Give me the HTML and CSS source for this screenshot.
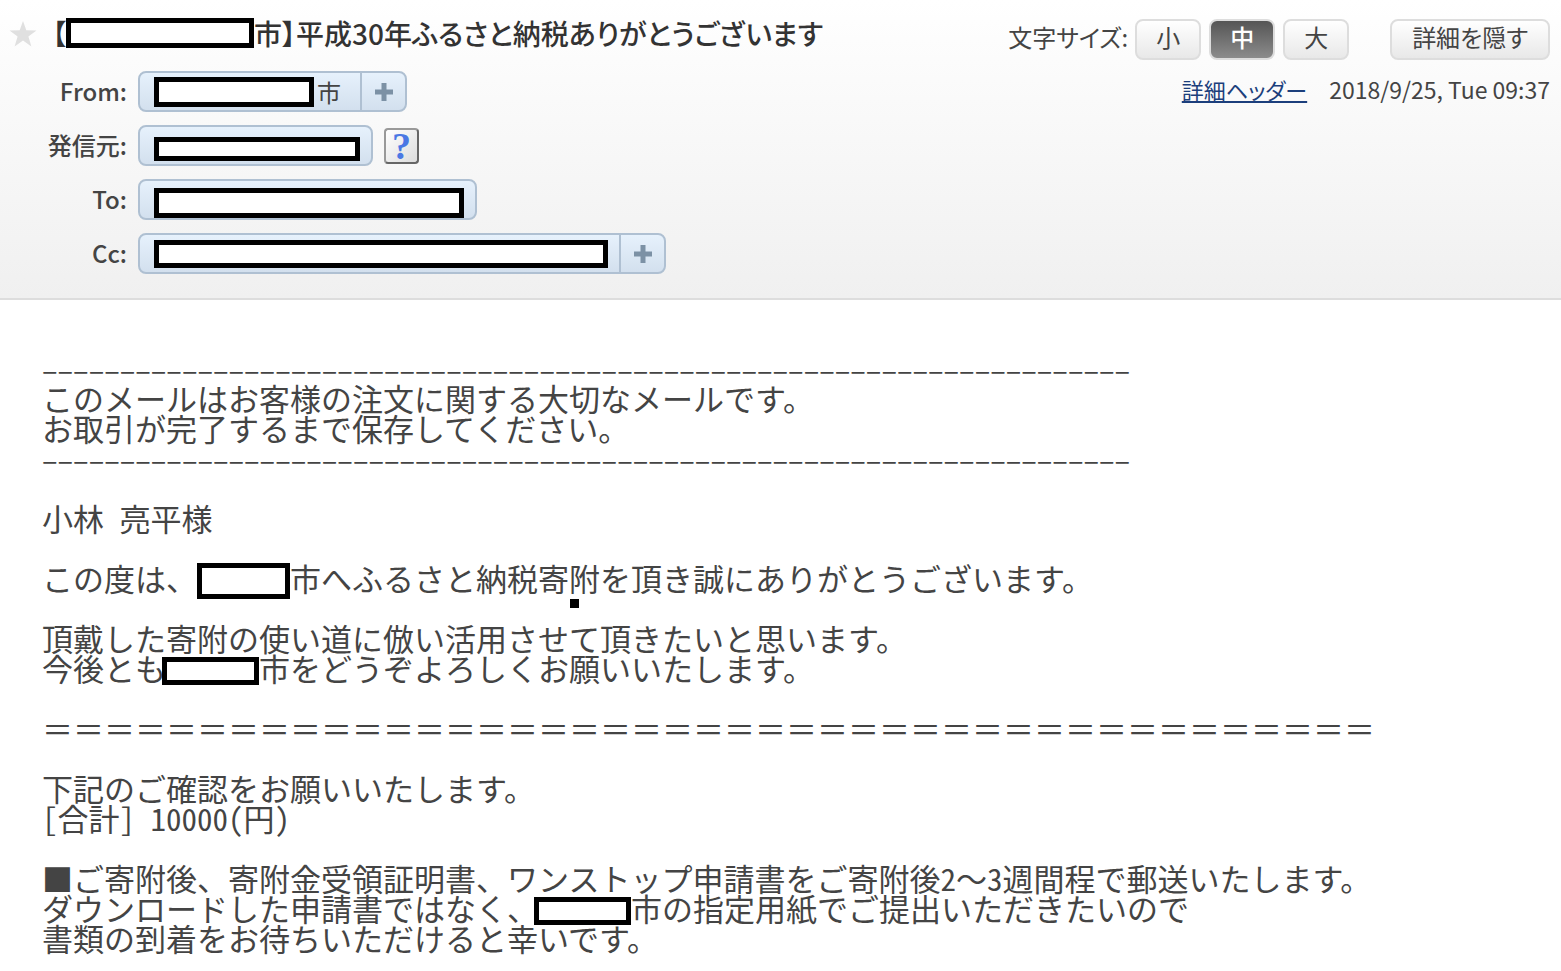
FILE: index.html
```html
<!DOCTYPE html>
<html lang="ja">
<head>
    <meta charset="UTF-8">
    <meta name="viewport" content="width=device-width, initial-scale=1.0">
    <title>平成30年ふるさと納税ありがとうございます</title>
    <link rel="stylesheet" href="styles.css">
</head>
<body>
    <header class="mail-header">
        <div class="mail-main">
            <div class="subject-row">
                <button type="button" class="star" aria-label="スター">
                    <svg width="28" height="26" viewBox="0 0 28 26"><path d="M14 0 L17.3 9.3 L27.5 9.6 L19.4 15.6 L22.4 25.4 L14 19.6 L5.6 25.4 L8.6 15.6 L0.5 9.6 L10.7 9.3 Z" fill="#e0e0e0"/></svg>
                </button>
                <h1 class="subject">【<span class="mask mask-subject"></span>市】平成30年ふるさと納税ありがとうございます</h1>
            </div>

            <dl class="fields">
                <dt>From:</dt>
                <dd>
                    <span class="chip">
                        <span class="chip-name with-text"><span class="mask mask-from"></span>市</span>
                        <button type="button" class="add" aria-label="アドレス帳に追加">
                            <svg width="20" height="20" viewBox="0 0 20 20"><path d="M10 1V19M1 10H19" stroke="#7c91a5" stroke-width="5"/></svg>
                        </button>
                    </span>
                </dd>
                <dt>発信元:</dt>
                <dd>
                    <span class="chip">
                        <span class="chip-name"><span class="mask mask-sender"></span></span>
                    </span>
                    <button type="button" class="help">?</button>
                </dd>
                <dt>To:</dt>
                <dd>
                    <span class="chip">
                        <span class="chip-name"><span class="mask mask-to"></span></span>
                    </span>
                </dd>
                <dt>Cc:</dt>
                <dd>
                    <span class="chip">
                        <span class="chip-name"><span class="mask mask-cc"></span></span>
                        <button type="button" class="add" aria-label="アドレス帳に追加">
                            <svg width="20" height="20" viewBox="0 0 20 20"><path d="M10 1V19M1 10H19" stroke="#7c91a5" stroke-width="5"/></svg>
                        </button>
                    </span>
                </dd>
            </dl>
        </div>

        <div class="mail-tools">
            <div class="tool-row">
                <span class="size-label">文字サイズ:</span>
                <div class="sizes">
                    <button type="button" class="btn">小</button>
                    <button type="button" class="btn active">中</button>
                    <button type="button" class="btn">大</button>
                </div>
                <button type="button" class="btn btn-detail">詳細を隠す</button>
            </div>
            <div class="meta-row">
                <a href="#">詳細ヘッダー</a>
                <time datetime="2018-09-25T09:37">2018/9/25, Tue 09:37</time>
            </div>
        </div>
    </header>

    <main class="mail-body">
        <p>
            <span class="rule">––––––––––––––––––––––––––––––––––––––––––––––––––––––––––––––––––––––</span><br>
            このメールはお客様の注文に関する大切なメールです。<br>
            お取引が完了するまで保存してください。<br>
            <span class="rule">––––––––––––––––––––––––––––––––––––––––––––––––––––––––––––––––––––––</span>
        </p>
        <p>小林 亮平様</p>
        <p>この度は、<span class="mask mask-city tall"></span>市へふるさと納税寄<span class="dotted">附</span>を頂き誠にありがとうございます。</p>
        <p>
            頂戴した寄附の使い道に倣い活用させて頂きたいと思います。<br>
            今後とも<span class="mask mask-city"></span>市をどうぞよろしくお願いいたします。
        </p>
        <p class="full-width">＝＝＝＝＝＝＝＝＝＝＝＝＝＝＝＝＝＝＝＝＝＝＝＝＝＝＝＝＝＝＝＝＝＝＝＝＝＝＝＝＝＝＝</p>
        <p>
            下記のご確認をお願いいたします。<br>
            [合計] 10000(円)
        </p>
        <p>
            ■ご寄附後、寄附金受領証明書、ワンストップ申請書をご寄附後2<span class="full-width">～</span>3週間程で郵送いたします。<br>
            ダウンロードした申請書ではなく、<span class="mask mask-city"></span>市の指定用紙でご提出いただきたいので<br>
            書類の到着をお待ちいただけると幸いです。
        </p>
    </main>
</body>
</html>
```
FILE: styles.css
```css
* {
    box-sizing: border-box;
}

body {
    margin: 0;
    background: #fff;
    color: #444;
    font-family: "Noto Sans CJK JP", "Liberation Sans", sans-serif;
}

button {
    font-family: inherit;
    padding: 0;
    cursor: pointer;
}

/* Header */
.mail-header {
    display: flex;
    justify-content: space-between;
    padding: 12px 11px 24px 9px;
    border-bottom: 2px solid #ddd;
    background: linear-gradient(to bottom, #fff, #f0f0f0);
    font-size: 24px;
    font-feature-settings: "palt";
}

.subject-row {
    display: flex;
    align-items: center;
    gap: 15px;
    height: 44px;
}

.star {
    display: flex;
    border: none;
    background: none;
}

.subject {
    display: flex;
    align-items: center;
    margin: 0;
    padding-bottom: 2px;
    color: #333;
    font-size: 28px;
    font-weight: 500;
    line-height: 42px;
    white-space: nowrap;
}

.fields {
    display: grid;
    grid-template-columns: 118px auto;
    column-gap: 11px;
    row-gap: 13px;
    margin: 15px 0 0;
}

.fields dt {
    text-align: right;
    font-weight: 500;
    line-height: 40px;
}

.fields dd {
    display: flex;
    align-items: center;
    gap: 11px;
    margin: 0;
}

.chip {
    display: flex;
    height: 41px;
    border: 2px solid #afc0d2;
    border-radius: 8px;
    background: linear-gradient(to bottom, #e6f1fc, #d3e0ee);
}

.chip-name {
    display: flex;
    align-items: center;
    gap: 3px;
    padding: 0 11px 0 14px;
    line-height: 34px;
}

.chip-name.with-text {
    padding-right: 19px;
}

.add {
    display: flex;
    align-items: center;
    justify-content: center;
    width: 45px;
    border: none;
    border-left: 2px solid #afc0d2;
    background: none;
}

.help {
    width: 35px;
    height: 36px;
    border: 2px solid #777;
    border-color: #999 #666 #666 #999;
    border-radius: 4px;
    background: linear-gradient(135deg, #fff, #dcdcdc);
    color: #4a78e4;
    font-family: "Liberation Serif", serif;
    font-size: 38px;
    font-weight: bold;
    line-height: 32px;
}

/* Blacked-out names */
.mask {
    display: inline-block;
    flex: none;
    border: 5px solid #000;
    background: #fff;
}

.mask-subject {
    width: 188px;
    height: 30px;
}

.mask-from {
    width: 160px;
    height: 30px;
}

.mask-sender {
    align-self: flex-end;
    width: 206px;
    height: 24px;
    margin-bottom: 3px;
}

.mask-to {
    align-self: flex-end;
    width: 310px;
    height: 30px;
}

.mask-cc {
    width: 454px;
    height: 28px;
}

.mask-city {
    width: 97px;
    height: 28px;
    margin: -10px 0 -10px -4px;
    vertical-align: 6px;
}

.mask-city.tall {
    width: 93px;
    height: 36px;
    margin-left: 0;
    vertical-align: 2px;
}

/* Right side of the header */
.mail-tools {
    display: flex;
    flex-direction: column;
    white-space: nowrap;
}

.tool-row {
    display: flex;
    align-items: center;
    justify-content: flex-end;
    margin-top: 7px;
}

.size-label {
    padding-bottom: 6px;
}

.sizes {
    display: flex;
    gap: 8px;
    margin: 0 41px 0 7px;
}

.btn {
    min-width: 66px;
    height: 41px;
    padding-bottom: 5px;
    border: 2px solid #ddd;
    border-radius: 8px;
    background: linear-gradient(to bottom, #fff, #e8e8e8);
    color: #444;
    font-size: 24px;
    line-height: 32px;
    font-feature-settings: "palt";
}

.btn.active {
    background: linear-gradient(to bottom, #555, #8c8c8c);
    color: #fff;
    font-weight: 500;
}

.btn-detail {
    padding-left: 20px;
    padding-right: 20px;
}

.meta-row {
    display: flex;
    align-items: center;
    justify-content: flex-end;
    gap: 22px;
    margin-top: 11px;
    line-height: 36px;
}

.meta-row a {
    color: #1c3f7c;
    font-size: 22px;
}

.meta-row time {
    font-size: 23px;
}

/* Message text */
.mail-body {
    padding: 53px 42px 16px;
    font-size: 31px;
    line-height: 30px;
    font-feature-settings: "hwid";
}

.mail-body p {
    margin: 0 0 30px;
}

.mail-body p:last-child {
    margin-bottom: 0;
}

.rule {
    font-size: 29px;
}

.full-width {
    font-feature-settings: normal;
}

.dotted {
    position: relative;
}

.dotted::after {
    content: "";
    position: absolute;
    left: 1px;
    bottom: -8px;
    width: 9px;
    height: 9px;
    background: #000;
}
```
